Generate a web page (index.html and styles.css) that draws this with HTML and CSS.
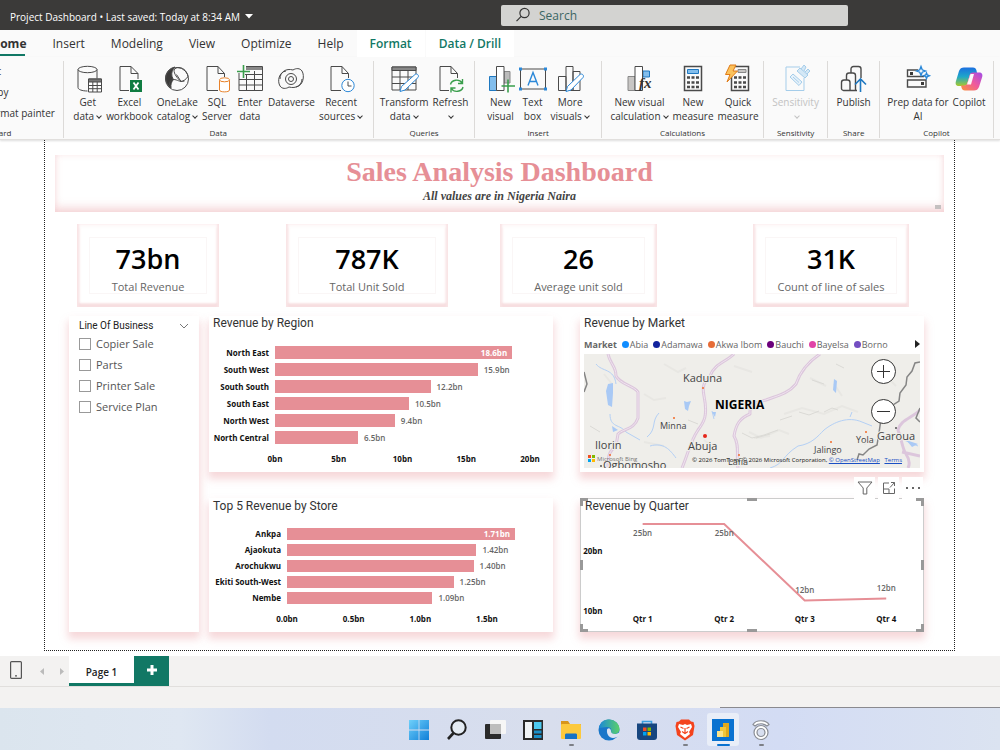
FILE: index.html
```
<!DOCTYPE html>
<html lang="en">
<head>
  <meta charset="UTF-8">
  <title>Project Dashboard</title>
  <meta name="viewport" content="width=device-width, initial-scale=1.0">
  <link rel="stylesheet" href="styles.css">
</head>
<body>
  <header class="titlebar">
    <button class="file-name">Project Dashboard • Last saved: Today at 8:34 AM
      <svg width="8" height="5" viewBox="0 0 8 5"><path d="M0 0h8L4 4.5z" fill="#fff"/></svg>
    </button>
    <label class="search">
      <svg width="16" height="16" viewBox="0 0 16 16" fill="none" stroke="#333" stroke-width="1.2"><circle cx="9.5" cy="6" r="4.6"/><path d="M6.2 9.4L1.5 14.2"/></svg>
      <input type="text" placeholder="Search" aria-label="Search">
    </label>
  </header>

  <nav class="tabs">
    <a href="#" class="active">Home</a>
    <a href="#">Insert</a>
    <a href="#">Modeling</a>
    <a href="#">View</a>
    <a href="#">Optimize</a>
    <a href="#">Help</a>
    <a href="#" class="context">Format</a>
    <a href="#" class="context">Data / Drill</a>
  </nav>

  <!-- Ribbon -->
  <div class="ribbon">
    <section class="group clipboard">
      <div class="stack">
        <button>Cut</button>
        <button>Copy</button>
        <button>Format painter</button>
      </div>
      <h6>Clipboard</h6>
    </section>

    <section class="group g-data">
      <div class="items">
        <button>
          <svg class="ico" viewBox="0 0 28 28"><path d="M4 4.5v18c0 2 4 3.5 9.5 3.5M23 4.5v9"/><ellipse cx="13.5" cy="4.5" rx="9.5" ry="3.2"/><path d="M14.5 14h13v13h-13z" fill="#fff"/><path d="M14.5 14h13v3h-13z" fill="#777"/><path d="M14.5 20.5h13M14.5 23.7h13M18.8 17v10M23.2 17v10"/></svg>
          <span>Get<br>data<i class="chev"></i></span>
        </button>
        <button>
          <svg class="ico" viewBox="0 0 28 28"><path d="M14 25.5H5v-24h11l7 7V14M16 1.5v7h7"/><path d="M15 15h12v12H15z" fill="#107c41" stroke="none"/><path d="M18.5 17.5l5 7M23.5 17.5l-5 7" stroke="#fff" stroke-width="1.8"/></svg>
          <span>Excel<br>workbook</span>
        </button>
        <button>
          <svg class="ico" viewBox="0 0 28 28"><path d="M12 2C4 3.5 0 12 4.5 19.5c1 1.7 2 2.5 3.5 3.5-.5-4 .5-6 2.5-8.5C8 11 8 6 12 2z" fill="#3b3a39"/><circle cx="14" cy="14" r="11.5"/><path d="M11 5c1-2 3-2.5 5-2.5 5 .5 8 4 9 9-2 3-4.5 4.500-7 5C14 13 11 9 11 5zM6.5 20c-.5-3 1-5 4-5.5 4 0 6 3 11 1.5M13.5 9.5l4.5 7"/></svg>
          <span>OneLake<br>catalog<i class="chev"></i></span>
        </button>
        <button>
          <svg class="ico" viewBox="0 0 28 28"><path d="M15 25.5H4v-24h11l6.5 7V12M15 1.5v7h6.5"/><g stroke="#e8822b" fill="#fff"><path d="M16.5 15v10c0 2.5 10 2.5 10 0V15"/><ellipse cx="21.5" cy="14.8" rx="5" ry="2"/></g></svg>
          <span>SQL<br>Server</span>
        </button>
        <button>
          <svg class="ico" viewBox="0 0 28 28"><path d="M3 8v17.5h23.5v-24H10M9 9.5h17.5M3 14.5h23.5M3 20h23.5M10.5 9v16.5M18.5 6v19.5"/><path d="M10 2h16v3H10z" fill="#888" stroke="none"/><path d="M7.5 0v13M1 6.5h13" stroke="#3a9e4c" stroke-width="1.6"/></svg>
          <span>Enter<br>data</span>
        </button>
        <button>
          <svg class="ico" viewBox="0 0 28 28"><circle cx="14" cy="14" r="5.5"/><circle cx="14" cy="14" r="2.5"/><path d="M19 22c7-1 9-11 6-16-2-3-6-3-9-1C9 3 3 7 3 14M9 6C2 7 0 16 3 21c2 3 6 3 9 1 7 2 13-2 13-8"/></svg>
          <span>Dataverse</span>
        </button>
        <button>
          <svg class="ico" viewBox="0 0 28 28"><path d="M14 25.5H4v-24h11l6.5 7V13M15 1.5v7h6.5"/><circle cx="21" cy="20.5" r="6.2" stroke="#2b88d8" fill="#fff"/><path d="M21 16.5V21h3.5"/></svg>
          <span>Recent<br>sources<i class="chev"></i></span>
        </button>
      </div>
      <h6>Data</h6>
    </section>

    <section class="group g-queries">
      <div class="items">
        <button>
          <svg class="ico" viewBox="0 0 28 28"><path d="M2 2h24v23H2z"/><path d="M2 2h24v3.5H2z" fill="#888"/><path d="M2 12h24M2 18.5h24M10 5.5V25M18 5.5V25"/><path d="M10 26.5l1.5-5L25 9.5c2-1.5 4.5 1 3 3L15 25z" fill="#fff" stroke="#2b88d8"/></svg>
          <span>Transform<br>data<i class="chev"></i></span>
        </button>
        <button>
          <svg class="ico" viewBox="0 0 28 28"><path d="M13 25.5H4v-24h11l6.5 7V13M15 1.5v7h6.5"/><g stroke="#3a9e4c" stroke-width="1.4"><path d="M14.5 19.5c1-5 9-6 11.5-1.5M26.5 14v4.5H22M27 22c-1 5-9 6-11.5 1.5M15 27.5V23h4.5"/></g></svg>
          <span>Refresh<br><i class="chev"></i></span>
        </button>
      </div>
      <h6>Queries</h6>
    </section>

    <section class="group g-insert">
      <div class="items">
        <button>
          <svg class="ico" viewBox="0 0 28 28"><path d="M2.5 11.5H10v14H2.5z" fill="#83beec" stroke="#1f78c0"/><path d="M17 6.5h6V18h-6z" fill="#bbb" stroke="#888"/><path d="M9.5 1.5H17v24H9.5z" fill="#fff"/><path d="M21 14.5v13M14.5 21H28" stroke="#3a9e4c" stroke-width="1.6"/></svg>
          <span>New<br>visual</span>
        </button>
        <button>
          <svg class="ico" viewBox="0 0 28 28"><path d="M1.5 4h25v20h-25z"/><path d="M9 20.5l5-13 5 13M10.8 16.5h6.5" stroke="#2b88d8" stroke-width="1.4"/><path d="M0 2.5h3v3H0zM25 2.5h3v3h-3zM0 22.5h3v3H0zM25 22.5h3v3h-3z" fill="#2b88d8" stroke="none"/></svg>
          <span>Text<br>box</span>
        </button>
        <button>
          <svg class="ico" viewBox="0 0 28 28"><path d="M2.5 11.5H10v14H2.5zM17 6.5h7v19h-7zM10 1.5h7v24h-7z"/><path d="M10 26.5l1.5-5L24 9.5c2-1.5 4.5 1 3 3L15 25z" fill="#fff" stroke="#2b88d8"/></svg>
          <span>More<br>visuals<i class="chev"></i></span>
        </button>
      </div>
      <h6>Insert</h6>
    </section>

    <section class="group g-calc">
      <div class="items">
        <button>
          <svg class="ico" viewBox="0 0 28 28"><path d="M3 11.5h7v14H3z" fill="#c8c6c4" stroke="#888"/><path d="M18 6h6.5v6H18z" fill="#83beec" stroke="#1f78c0"/><path d="M10 1.5h7.5v24H10z" fill="#fff"/><text x="14" y="23" class="fx">fx</text></svg>
          <span>New visual<br>calculation<i class="chev"></i></span>
        </button>
        <button>
          <svg class="ico" viewBox="0 0 28 28"><path d="M5.5 1.5h17v24h-17z" stroke-width="1.5"/><path d="M8.5 4.5h11v4h-11z" fill="#83beec" stroke="#1f78c0"/><path d="M8 12.5h12M8 17.5h12M8 22h12" stroke-width="2.6" stroke-dasharray="3 1.5"/></svg>
          <span>New<br>measure</span>
        </button>
        <button>
          <svg class="ico" viewBox="0 0 28 28"><path d="M7.5 1.5h17v24h-17z" stroke-width="1.5"/><path d="M14 4.5h8v3h-8z" fill="#c8c6c4" stroke="#888"/><path d="M10 12.5h12M10 17.5h12M10 22h12" stroke-width="2.6" stroke-dasharray="3 1.5"/><path d="M6 0h6L9 6h4.5L3 17l3-7.5H1.5z" fill="#fbc25c" stroke="#e07b18"/></svg>
          <span>Quick<br>measure</span>
        </button>
      </div>
      <h6>Calculations</h6>
    </section>

    <section class="group g-sens">
      <div class="items">
        <button disabled>
          <svg class="ico light" viewBox="0 0 28 28"><path d="M18 2H4v23.5h18V13"/><path d="M8 12l3-3 9 8-3 3.5zM11 12l6 5.5" fill="#e7f2fa"/><path d="M15 6l3-3 8 7-3 3zM19 4l3-4 2 2-2 4M23 7l3-3 2 2-3 3" fill="#d4e8f6"/></svg>
          <span>Sensitivity<br><i class="chev"></i></span>
        </button>
      </div>
      <h6>Sensitivity</h6>
    </section>

    <section class="group g-share">
      <div class="items">
        <button>
          <svg class="ico" viewBox="0 0 28 28" stroke-width="1.4"><path d="M11 8V4c0-1.500 1-2.500 2.500-2.500h5C20 1.500 21 2.500 21 4v9M6.500 15v-4.500C6.500 9 7.500 8 9 8h4c1.500 0 2.500 1 2.500 2.500V25.500M1.500 17.500c0-1.500 1-2.500 2.500-2.500h3.500c1.500 0 2.500 1 2.500 2.500v8H3.500c-1 0-2-1-2-2zM10 25.500h7"/><path d="M20.500 27V15M15 19.500l5.500-5.500 5.500 5.500" stroke="#1f78c0" stroke-width="1.6"/></svg>
          <span>Publish</span>
        </button>
      </div>
      <h6>Share</h6>
    </section>

    <section class="group g-copilot">
      <div class="items">
        <button>
          <svg class="ico" viewBox="0 0 28 28" stroke-width="1.4"><path d="M14 5H3.500v6.500H20M3.500 15H22v7H3.500z"/><path d="M6 7h3v3H6zM17 17h3v3h-3z" fill="#3b3a39" stroke="none"/><path d="M17 1.500l1.200 3.300 3.300 1.200-3.300 1.200L17 10.500l-1.200-3.300L12.500 6l3.300-1.200zM22.500 8l.8 2 2 .8-2 .8-.8 2-.8-2-2-.8 2-.8z" fill="#fff" stroke="#2b88d8"/></svg>
          <span>Prep data for<br>AI</span>
        </button>
        <button>
          <svg class="ico flat" viewBox="0 0 28 28">
            <defs>
              <linearGradient id="cpA" x1="0" y1="0" x2="0" y2="1"><stop offset="0" stop-color="#1b6fe0"/><stop offset=".5" stop-color="#1fa7c9"/><stop offset="1" stop-color="#a8c92b"/></linearGradient>
              <linearGradient id="cpB" x1="1" y1="0" x2="0" y2="1"><stop offset="0" stop-color="#a14be8"/><stop offset=".5" stop-color="#f05a9c"/><stop offset="1" stop-color="#f9943a"/></linearGradient>
            </defs>
            <path d="M9 2.500h9c2 0 3 1 3.500 3L22 8h-4c-2 0-3 1-3.500 3l-2 7c-.5 2-1.500 3-3.500 3H4c-3 0-4-2-3-5L4 6c1-2.500 2.500-3.500 5-3.500z" fill="url(#cpA)"/>
            <path d="M19 25.500h-9c-2 0-3-1-3.500-3L6 20.500h3c2 0 3-1 3.500-3l2-7c.5-2 1.500-3 3.500-3h6c3 0 4 2 3 5l-3 9.500c-1 2.500-2.500 3.500-5 3.500z" fill="url(#cpB)"/>
            <path d="M15.500 9h3.500l-3 10.500h-4z" fill="#fafafa"/>
          </svg>
          <span>Copilot</span>
        </button>
      </div>
      <h6>Copilot</h6>
    </section>
  </div>

  <!-- Report canvas -->
  <main class="canvas">
    <div class="board">
      <div class="banner">
        <h1>Sales Analysis Dashboard</h1>
        <p>All values are in Nigeria Naira</p>
        <span class="grip"></span>
      </div>

      <div class="kpis">
        <div class="kpi"><div><b>73bn</b><span>Total Revenue</span></div></div>
        <div class="kpi"><div><b>787K</b><span>Total Unit Sold</span></div></div>
        <div class="kpi"><div><b>26</b><span>Average unit sold</span></div></div>
        <div class="kpi"><div><b>31K</b><span>Count of line of sales</span></div></div>
      </div>

      <div class="visuals">
        <section class="card slicer">
          <h3>Line Of Business
            <svg width="10" height="6" viewBox="0 0 10 6" fill="none" stroke="#777"><path d="M1 1l4 4 4-4"/></svg>
          </h3>
          <label><input type="checkbox"> Copier Sale</label>
          <label><input type="checkbox"> Parts</label>
          <label><input type="checkbox"> Printer Sale</label>
          <label><input type="checkbox"> Service Plan</label>
        </section>

        <section class="card region">
          <h2>Revenue by Region</h2>
          <div class="bars">
            <div class="row"><span>North East</span><div><i style="width:93%"><em>18.6bn</em></i></div></div>
            <div class="row"><span>South West</span><div><i style="width:79.5%"></i><em>15.9bn</em></div></div>
            <div class="row"><span>South South</span><div><i style="width:61%"></i><em>12.2bn</em></div></div>
            <div class="row"><span>South East</span><div><i style="width:52.5%"></i><em>10.5bn</em></div></div>
            <div class="row"><span>North West</span><div><i style="width:47%"></i><em>9.4bn</em></div></div>
            <div class="row"><span>North Central</span><div><i style="width:32.5%"></i><em>6.5bn</em></div></div>
          </div>
          <div class="axis"><span>0bn</span><span>5bn</span><span>10bn</span><span>15bn</span><span>20bn</span></div>
        </section>

        <section class="card market">
          <h2>Revenue by Market</h2>
          <div class="legend">
            <b>Market</b>
            <span class="abia">Abia</span>
            <span class="adamawa">Adamawa</span>
            <span class="akwa">Akwa Ibom</span>
            <span class="bauchi">Bauchi</span>
            <span class="bayelsa">Bayelsa</span>
            <span class="borno">Borno</span>
            <button aria-label="Next"><svg width="5" height="8" viewBox="0 0 5 8"><path d="M0 0l5 4-5 4z" fill="#222"/></svg></button>
          </div>
          <div class="map">
            <svg viewBox="0 0 336 114" preserveAspectRatio="xMidYMid slice">
              <rect width="336" height="114" fill="#efeeea"/>
              <!-- relief -->
              <g fill="none" stroke="#e8e7e3" stroke-width="2">
                <path d="M80 10l14 8 8-4M60 40l10 6 12-2M150 12l18 6M200 60l18-6 22 6 18-8 16 6M165 78l12 6 18-8 10 4M170 84l16-2M20 20l8 10M120 86l10 8M226 24l16 8M250 30l8 12M60 88l20 4M280 90l12-4M300 20l12 12"/>
              </g>
              <g fill="none" stroke="#dbdad6"><path d="M158 79l10 5 12-3 14-5M172 84l14-4M196 66l12-4M215 58l10 3 10-4M228 26l12 4M252 10l8 4M6 72l10 6M104 66l10 4M240 58l8-4 6 2"/></g>
              <!-- water -->
              <g fill="none" stroke="#b4d0f5">
                <path d="M12 10c6 8 18 4 20 20M26 60c0 14 10 10 16 18l14 8M66 92c14-4 20 4 26 12M75 59c-8 8-2 16-12 24M186 114c14-4 12-12 28-22 14-2 20-10 26-16 10-8 24-14 38-8l10 4M128 57l2 8M268 58l-2 5M320 86l14 6"/>
              </g>
              <g fill="#a9c9f5"><path d="M24 30l5-1v10l-1 14-4-2-2-14zM28 72l6 4-5 2zM100 47l3 1 4-1-2 5-1 5-3-2zM250 25l3 2-1 12-3-3zM322 86l12 4-6 3zM128 58h4l-1 5z"/></g>
              <!-- roads -->
              <g fill="none" stroke="#dcc6dc" stroke-width="3" stroke-linejoin="round">
                <path d="M24 0c2 10 8 12 8 22 4 8 18 10 22 16v26c-4 12-14 10-20 16l-2 12c-8 6-8 12-8 22"/>
                <path d="M150 0c-8 8-20 10-24 22-6 6-8 10-6 20 4 20 0 26-6 34-8 12-10 24-16 38"/>
                <path d="M236 0c-12 8-20 18-24 30-8 10-20 12-30 16-18 4-16 8-16 14-10 4-14 10-16 22 6 10 2 20 4 32"/>
                <path d="M336 56c-8 8-20 10-22 20 4 10 4 18 8 24 4 6 4 10 2 14M318 98l18 4"/>
              </g>
              <g fill="none" stroke="#efe4ef"><path d="M24 0c2 10 8 12 8 22 4 8 18 10 22 16v26c-4 12-14 10-20 16l-2 12c-8 6-8 12-8 22M150 0c-8 8-20 10-24 22-6 6-8 10-6 20 4 20 0 26-6 34-8 12-10 24-16 38M236 0c-12 8-20 18-24 30-8 10-20 12-30 16-18 4-16 8-16 14-10 4-14 10-16 22 6 10 2 20 4 32"/></g>
              <!-- border -->
              <g fill="none" stroke="#858585" stroke-width="1.5"><path d="M336 8l-5 1-3 8-5 6-1 8-6 8-1 8-6 4-4 10-8 4-2 14-2 12-8 4-6 6-4-1-2 6M336 54l-4 10 4 4M0 18l3 12-3 8"/></g>
              <g fill="#f26b2a"><circle cx="119" cy="34" r="1"/><circle cx="90" cy="64" r="1"/><circle cx="155" cy="101" r="1"/><circle cx="247" cy="88" r="1"/><circle cx="282" cy="78" r="1"/><circle cx="26" cy="101" r="1"/></g>
              <circle cx="121" cy="82" r="2" fill="#e5261b"/>
              <g fill="#555"><circle cx="312" cy="74" r="1"/><circle cx="17" cy="112" r="1"/></g>
              <g class="places">
                <text x="99" y="28">Kaduna</text>
                <text x="76" y="75" class="town">Minna</text>
                <text x="11" y="95">Ilorin</text>
                <text x="104" y="96">Abuja</text>
                <text x="19" y="115">Ogbomosho</text>
                <text x="230" y="99" class="town">Jalingo</text>
                <text x="272" y="89" class="town">Yola</text>
                <text x="293" y="86">Garoua</text>
                <text x="144" y="111" class="town">Lafia</text>
                <text x="131" y="55" class="country">NIGERIA</text>
              </g>
              <path d="M4 101h3v3H4z" fill="#f25022"/><path d="M8 101h3v3H8z" fill="#7fba00"/><path d="M4 105h3v3H4z" fill="#00a4ef"/><path d="M8 105h3v3H8z" fill="#ffb900"/>
              <text x="13" y="107" class="bing">Microsoft Bing</text>
            </svg>
            <div class="zoom">
              <button aria-label="Zoom in"><svg width="15" height="15" viewBox="0 0 15 15" stroke="#333"><path d="M7.5 1v13M1 7.5h13"/></svg></button>
              <button aria-label="Zoom out"><svg width="15" height="15" viewBox="0 0 15 15" stroke="#333"><path d="M1 7.5h13"/></svg></button>
            </div>
            <small>© 2026 TomTom, © 2026 Microsoft Corporation, <a href="#">© OpenStreetMap</a> <a href="#">Terms</a></small>
          </div>
        </section>

        <section class="card store">
          <h2>Top 5 Revenue by Store</h2>
          <div class="bars">
            <div class="row"><span>Ankpa</span><div><i style="width:114%"><em>1.71bn</em></i></div></div>
            <div class="row"><span>Ajaokuta</span><div><i style="width:94.7%"></i><em>1.42bn</em></div></div>
            <div class="row"><span>Arochukwu</span><div><i style="width:93.3%"></i><em>1.40bn</em></div></div>
            <div class="row"><span>Ekiti South-West</span><div><i style="width:83.3%"></i><em>1.25bn</em></div></div>
            <div class="row"><span>Nembe</span><div><i style="width:72.7%"></i><em>1.09bn</em></div></div>
          </div>
          <div class="axis"><span>0.0bn</span><span>0.5bn</span><span>1.0bn</span><span>1.5bn</span></div>
        </section>

        <section class="card quarter">
          <div class="tools">
            <button aria-label="Filters"><svg width="16" height="14" viewBox="0 0 16 14"><path d="M1 1h14L9.800 7v6H6.200V7z"/></svg></button>
            <button aria-label="Focus mode"><svg width="14" height="14" viewBox="0 0 14 14"><path d="M7 2H1.500v10.500h11V7.500M1.500 8H7v4.500M8 6.500l4.500-5M9 1.500h3.500V5"/></svg></button>
            <button aria-label="More options"><svg width="16" height="14" viewBox="0 0 16 14"><path d="M1 7h2M7 7h2M13 7h2" stroke-width="2"/></svg></button>
          </div>
          <h2>Revenue by Quarter</h2>
          <svg class="line" viewBox="0 0 344 118">
            <path d="M62 11h82l81 77 82-2" fill="none" stroke="#e68f96" stroke-width="2"/>
            <g class="vals"><text x="62" y="23">25bn</text><text x="144" y="23">25bn</text><text x="225" y="80">12bn</text><text x="307" y="78">12bn</text></g>
            <g class="ticks"><text x="12" y="41">20bn</text><text x="12" y="102">10bn</text><text x="62" y="110">Qtr 1</text><text x="144" y="110">Qtr 2</text><text x="225" y="110">Qtr 3</text><text x="307" y="110">Qtr 4</text></g>
          </svg>
          <div class="handles"><i></i><i></i><i></i><i></i><i></i><i></i><i></i><i></i></div>
        </section>
      </div>
    </div>
  </main>

  <footer class="pages">
    <button class="phone" aria-label="Mobile layout"><svg width="12" height="18" viewBox="0 0 12 18" fill="none" stroke="#555" stroke-width="1.2"><rect x=".6" y=".6" width="10.8" height="16.8" rx="1"/><path d="M5 14.8h2"/></svg></button>
    <button aria-label="Previous page"><svg width="4" height="7" viewBox="0 0 4 7"><path d="M4 0v7L0 3.500z" fill="#bbb"/></svg></button>
    <button aria-label="Next page"><svg width="4" height="7" viewBox="0 0 4 7"><path d="M0 0v7l4-3.500z" fill="#bbb"/></svg></button>
    <button class="page">Page 1</button>
    <button class="add" aria-label="New page"><svg width="10" height="10" viewBox="0 0 10 10" stroke="#fff" stroke-width="3"><path d="M5 0v10M0 5h10"/></svg></button>
  </footer>
  <div class="status"></div>

  <div class="taskbar">
    <button aria-label="Start"><svg viewBox="0 0 22 22"><defs><linearGradient id="win" x1="0" y1="0" x2="1" y2="1"><stop offset="0" stop-color="#6fd0fa"/><stop offset="1" stop-color="#0f7fd8"/></linearGradient></defs><path d="M1 1h9.600v9.600H1zM11.400 1H21v9.600h-9.600zM1 11.400h9.600V21H1zM11.400 11.400H21V21h-9.600z" fill="url(#win)"/></svg></button>
    <button aria-label="Search"><svg viewBox="0 0 22 22" fill="none" stroke="#222" stroke-width="2"><circle cx="12.5" cy="8.5" r="7.2" fill="#e4ebf3"/><path d="M7.500 14L2 20" stroke-width="2.6"/></svg></button>
    <button aria-label="Task view"><svg viewBox="0 0 22 22"><rect x="1" y="5" width="16" height="15" rx="1" fill="#2a2a2a"/><rect x="6" y="1" width="16" height="14" rx="1" fill="#f6f6f6"/><path d="M6 5h11v10H6z" fill="#bdbdbd"/></svg></button>
    <button aria-label="Widgets"><svg viewBox="0 0 22 22"><rect x="1" y="1" width="20" height="20" fill="#2a2a2a"/><path d="M3 3h7v16H3z" fill="#f1f4f6"/><path d="M12 3h7.500v7H12z" fill="#4cc9ef"/><path d="M12 11.500h7.500v3H12zM12 16h7.500v3H12z" fill="#1a8fc8"/></svg></button>
    <button aria-label="File Explorer" class="open"><svg viewBox="0 0 22 22"><path d="M1 2h7l2 3h11v3H1z" fill="#d8961a"/><rect x="1" y="5" width="20" height="15" rx="1" fill="#fcc93d"/><path d="M5 20v-4c0-1 .5-1.500 1.500-1.500h9c1 0 1.500.5 1.500 1.500v4z" fill="#1672c4"/></svg></button>
    <button aria-label="Edge"><svg viewBox="0 0 22 22"><defs><linearGradient id="edg" x1="0" y1="0" x2="1" y2="0"><stop offset="0" stop-color="#1b8ad6"/><stop offset="1" stop-color="#5bd06a"/></linearGradient></defs><circle cx="11" cy="11" r="10.5" fill="#1976c9"/><path d="M1 9C2 3 6 .5 11 .5 17 .5 21.500 5 21.500 10c0 3-2.500 5-5.500 5-2 0-3-1-3-2 1-2 0-5-4-5-3 0-6 1-8 1z" fill="url(#edg)"/><path d="M9 11c0-1 1.500-2 2.500-1.500 1.500 1 1.500 2 1.500 3 0 1.500 1.500 2.500 3.500 2.500 2 0 3.500-.5 5-2v3c-2 2-4 3-6.500 3-4 0-6.500-4-6-8z" fill="#dbe3f2"/></svg></button>
    <button aria-label="Store"><svg viewBox="0 0 22 22"><path d="M6.500 5V2.500h9V5" fill="none" stroke="#3a9fe0" stroke-width="1.6"/><path d="M1 4.500h20V18c0 2-1 3-3 3H4c-2 0-3-1-3-3z" fill="#17467f"/><path d="M7 8.500h3.500V12H7z" fill="#f25022"/><path d="M11.500 8.500H15V12h-3.500z" fill="#7fba00"/><path d="M7 13h3.500v3.500H7z" fill="#00a4ef"/><path d="M11.500 13H15v3.500h-3.500z" fill="#ffb900"/></svg></button>
    <button aria-label="Brave" class="open"><svg viewBox="0 0 22 22"><path d="M7 .5h8l2 2 2.500.5 1 4-1.500 9-8 5.500L3 16 1.500 7l1-4L5 2.500z" fill="#f4431d"/><path d="M5 5l4 1 2-1 2 1 4-1 1 3-3 5 1 2-5 4-5-4 1-2-3-5z" fill="#fff"/><path d="M6.500 8l3 1.500M15.500 8l-3 1.500M11 9v4.500M8 12.500l3 2 3-2" fill="none" stroke="#f4431d" stroke-width="1.2"/></svg></button>
    <button aria-label="Power BI" class="open current"><svg viewBox="0 0 22 22"><path d="M0 0h22v22H0z" fill="#0a72d0"/><path d="M11 4h6v14h-6z" fill="#e0a81c"/><path d="M8 8h6v10H8z" fill="#f2c63a"/><path d="M5 12h6v6H5z" fill="#fbe38a"/></svg></button>
    <button aria-label="Cast" class="open"><svg viewBox="0 0 22 22" fill="none" stroke="#8a8d94" stroke-width="1.2"><path d="M3 5.500C6 .5 16 .5 19 5.500L17 7C14 4 8 4 5 7z" fill="#fff"/><circle cx="11" cy="13.5" r="7" fill="#fff"/><circle cx="11" cy="13.5" r="4" fill="#d8dff0"/></svg></button>
  </div>
</body>
</html>
```
FILE: styles.css
```
* {
  box-sizing: border-box;
}
body {
  margin: 0;
  min-height: 100vh;
  display: flex;
  flex-direction: column;
  font-family: "Open Sans", "Noto Sans", sans-serif;
  font-size: 10px;
  color: #333;
  background: #fff;
  overflow-x: hidden;
}
button {
  font: inherit;
  color: inherit;
  background: none;
  border: none;
  padding: 0;
}
h1, h2, h3, h6, p {
  margin: 0;
}

/* title bar */
.titlebar {
  height: 30px;
  background: #3b3a39;
  display: grid;
  grid-template-columns: 501fr 347fr 152fr;
  align-items: center;
}
.file-name {
  justify-self: start;
  margin: 4px 0 0 10px;
  color: #fff;
  white-space: nowrap;
}
.file-name svg {
  margin: 0 0 2px 2px;
}
.search {
  height: 21px;
  background: #d3d3d1;
  border-radius: 2px;
  display: flex;
  align-items: center;
  gap: 8px;
  padding-left: 14px;
}
.search input {
  flex: 1;
  min-width: 0;
  border: none;
  background: none;
  font: 12px "Open Sans", sans-serif;
  padding: 0;
}
.search input::placeholder {
  color: #3c6664;
}

/* ribbon tabs */
.tabs {
  display: flex;
  height: 27px;
  background: #fafafa;
  padding-right: 22px;
  margin-left: -22px;
}
.tabs a {
  padding: 0 13px;
  font-size: 12px;
  line-height: 27px;
  color: #333;
  text-decoration: none;
  position: relative;
}
.tabs .active {
  font-weight: bold;
}
.tabs .active::after {
  content: "";
  position: absolute;
  left: 14px;
  right: 14px;
  bottom: 1px;
  height: 2px;
  background: #117865;
}
.tabs .context {
  font-weight: 600;
  color: #117865;
  background: #fff;
  margin-right: 1px;
}

.ribbon {
  display: flex;
  height: 83px;
  padding: 4px 0 1px;
  background: #fafafa;
  border-bottom: 1px solid #e1dfdd;
  box-shadow: 0 1px 2px #ddd;
}
.group {
  display: flex;
  flex-direction: column;
  border-right: 1px solid #dcdad8;
  min-width: 0;
}
.group h6 {
  font-size: 8px;
  font-weight: normal;
  line-height: 10px;
  text-align: center;
}
.items {
  flex: 1;
  display: flex;
  justify-content: center;
  align-items: flex-start;
  gap: 4px;
  padding-top: 4px;
}
.items button {
  text-align: center;
  line-height: 14px;
  white-space: nowrap;
}
.items button:disabled {
  color: #c3c3c3;
}
.ico {
  display: block;
  width: 28px;
  height: 28px;
  margin: 0 auto 2px;
  fill: none;
  stroke: #4a4a4a;
  overflow: visible;
}
.ico.light {
  stroke: #a5cdea;
}
.ico.flat {
  stroke: none;
}
.fx {
  font: italic bold 15px "Liberation Serif", serif;
  fill: #333;
  stroke: none;
}
.chev {
  display: inline-block;
  width: 4px;
  height: 4px;
  border: solid;
  border-width: 0 1px 1px 0;
  transform: rotate(45deg);
  margin: 0 1px 2px 3px;
}
.clipboard {
  flex: 63 1 0;
  overflow: hidden;
}
.stack {
  flex: 1;
  display: flex;
  flex-direction: column;
  align-items: flex-start;
  margin-left: -15px;
}
.stack button {
  line-height: 21px;
  white-space: nowrap;
}
.clipboard h6 {
  text-align: left;
  margin-left: -25px;
}
.g-data { flex: 312 1 0; }
.g-queries { flex: 101 1 0; }
.g-insert { flex: 127 1 0; }
.g-calc { flex: 162 1 0; }
.g-calc .items { padding-left: 4px; }
.g-sens { flex: 64 1 0; }
.g-share { flex: 51 1 0; }
.g-copilot { flex: 114 1 0; margin-right: 6px; }

/* report */
.canvas {
  flex: 1;
  padding: 0 45px 5px 44px;
}
.board {
  height: 100%;
  border: 1px dotted #222;
  border-top: none;
  padding: 15px 10px 18px;
}
.banner {
  position: relative;
  height: 57px;
  text-align: center;
  box-shadow: inset 0 -7px 10px -2px rgba(230, 143, 150, .3), inset 0 0 6px rgba(230, 143, 150, .2);
}
.banner h1 {
  font: bold 28px/34px "Liberation Serif", serif;
  color: #e68f96;
}
.banner p {
  font: italic bold 12px/14px "Liberation Serif", serif;
  color: #444;
}
.grip {
  position: absolute;
  right: 3px;
  bottom: 3px;
  width: 6px;
  height: 4px;
  background: #c4c0c0;
}
.kpis {
  display: grid;
  grid-template-columns: 142fr 67fr 162fr 52fr 157fr 96fr 156fr;
  margin: 12px 35px 9px 22px;
}
.kpi {
  height: 83px;
  padding: 13px 12px;
  box-shadow: inset 0 -2px 2px 2px rgba(230, 143, 150, .2), inset 0 2px 2px 2px rgba(255, 255, 255, .6), inset 0 0 2px 3px rgba(230, 143, 150, .12);
}
.kpi:nth-child(2) { grid-column: 3; }
.kpi:nth-child(3) { grid-column: 5; }
.kpi:nth-child(4) { grid-column: 7; }
.kpi div {
  height: 57px;
  border: 1px solid #faf6f6;
  display: flex;
  flex-direction: column;
  align-items: center;
  white-space: nowrap;
}
.kpi b {
  font-size: 27px;
  font-weight: 600;
  line-height: 42px;
  color: #000;
}
.kpi span {
  font-size: 11px;
  line-height: 14px;
  color: #666;
}

.visuals {
  display: grid;
  grid-template-columns: 130fr 354fr 27fr 344fr;
  grid-template-rows: 156px 134px;
  gap: 26px 0;
  margin: 0 20px 0 14px;
}
.card {
  position: relative;
  min-width: 0;
  background: #fff;
  box-shadow: 0 6px 8px 1px rgba(230, 143, 150, .35);
}
.card h2 {
  font: 12px/14px Roboto, sans-serif;
  color: #333;
  padding-left: 4px;
}
.slicer {
  grid-row: 1 / 3;
  padding: 3px 10px;
}
.region, .store {
  grid-column: 2;
  margin-left: 10px;
}
.market, .quarter {
  grid-column: 4;
}
.slicer h3 {
  font: 10px/14px Roboto, sans-serif;
  color: #222;
  display: flex;
  justify-content: space-between;
  align-items: center;
}
.slicer label {
  display: flex;
  align-items: center;
  gap: 5px;
  height: 21px;
  font-size: 11px;
  color: #555;
}
.slicer input {
  appearance: none;
  width: 12px;
  height: 12px;
  margin: 0;
  border: 1px solid #999;
  background: #fff;
}

/* bar charts */
.bars {
  display: grid;
  gap: 4px;
  font-size: 8px;
  font-weight: bold;
  color: #111;
}
.row {
  display: flex;
}
.row > span {
  flex: none;
  text-align: right;
  white-space: nowrap;
  margin-right: 6px;
}
.row > div {
  flex: 1;
  display: flex;
}
.row i {
  flex: none;
  background: #e68f96;
  text-align: right;
}
.row em {
  font-style: normal;
  font-weight: 600;
  color: #666;
  margin-left: 6px;
}
.row i em {
  color: #fff;
  font-weight: bold;
  margin-right: 5px;
}
.axis {
  display: flex;
  justify-content: space-between;
  font-size: 8px;
  font-weight: bold;
  line-height: 12px;
  color: #111;
}
.axis span {
  width: 0;
  display: flex;
  justify-content: center;
}
.region .bars { padding: 16px 23px 0 0; }
.region .row { line-height: 13px; }
.region .row > span { width: 60px; }
.region .axis { margin: 9px 23px 0 66px; }
.store h2 { padding-top: 1px; }
.store .bars { padding: 15px 66px 0 0; }
.store .row { line-height: 12px; }
.store .row > span { width: 72px; }
.store .axis { margin: 9px 66px 0 78px; }

/* map */
.legend {
  display: flex;
  align-items: center;
  gap: 5px;
  height: 14px;
  margin: 7px 4px 3px;
  font-size: 9px;
  color: #666;
  white-space: nowrap;
}
.legend span::before {
  content: "";
  display: inline-block;
  width: 7px;
  height: 7px;
  border-radius: 50%;
  margin-right: 1px;
  background: currentColor;
}
.legend .abia::before { background: #118dff; }
.legend .adamawa::before { background: #12239e; }
.legend .akwa::before { background: #e66c37; }
.legend .bauchi::before { background: #6b007b; }
.legend .bayelsa::before { background: #e044a7; }
.legend .borno::before { background: #744ec2; }
.legend button {
  margin-left: auto;
  line-height: 8px;
}
.map {
  position: relative;
  height: 114px;
  margin: 0 4px;
}
.map > svg {
  display: block;
  width: 100%;
  height: 100%;
}
.places text {
  font-size: 11px;
  fill: #444;
  paint-order: stroke;
  stroke: #efeeea;
  stroke-width: 2px;
}
.places .town {
  font-size: 9px;
}
.places .country {
  font-size: 12px;
  font-weight: bold;
  fill: #000;
}
.bing {
  font-size: 6px;
  fill: #777;
}
.zoom {
  position: absolute;
  top: 5px;
  right: 24px;
  display: grid;
  gap: 15px;
}
.zoom button {
  width: 25px;
  height: 25px;
  border: 1px solid #333;
  border-radius: 50%;
  background: #fff;
  display: grid;
  place-items: center;
}
.map small {
  position: absolute;
  right: 18px;
  bottom: 3px;
  font: 6px/10px "Open Sans", sans-serif;
  color: #111;
  white-space: nowrap;
}
.map a {
  color: #1a4fc4;
  margin-right: 3px;
}
.map a:last-child {
  margin-right: 0;
}

/* line chart, selected */
.quarter {
  border: 1px solid #ccc;
}
.line {
  display: block;
  width: 100%;
}
.line text {
  font-size: 8px;
  font-weight: bold;
  text-anchor: middle;
  fill: #111;
}
.line .vals text {
  font-weight: 600;
  fill: #666;
}
.tools {
  position: absolute;
  right: 0;
  bottom: 100%;
  display: flex;
  gap: 3px;
}
.tools button {
  width: 21px;
  height: 22px;
  background: #fff;
  display: grid;
  place-items: center;
}
.tools svg {
  fill: none;
  stroke: #666;
}
.handles i {
  position: absolute;
  width: 8px;
  height: 8px;
  border: 0 solid #999;
}
.handles i:nth-child(1) { left: -1px; top: -1px; border-width: 3px 0 0 3px; }
.handles i:nth-child(2) { left: calc(50% - 5px); top: -1px; width: 10px; border-top-width: 3px; }
.handles i:nth-child(3) { right: -1px; top: -1px; border-width: 3px 3px 0 0; }
.handles i:nth-child(4) { left: -1px; top: calc(50% - 5px); height: 10px; border-left-width: 3px; }
.handles i:nth-child(5) { right: -1px; top: calc(50% - 5px); height: 10px; border-right-width: 3px; }
.handles i:nth-child(6) { left: -1px; bottom: -1px; border-width: 0 0 3px 3px; }
.handles i:nth-child(7) { left: calc(50% - 5px); bottom: -1px; width: 10px; border-bottom-width: 3px; }
.handles i:nth-child(8) { right: -1px; bottom: -1px; border-width: 0 3px 3px 0; }

/* page tabs */
.pages {
  display: flex;
  align-items: stretch;
  height: 31px;
  background: #f3f2f1;
  border-bottom: 1px solid #e1dfdd;
  padding-left: 10px;
}
.pages button {
  width: 20px;
}
.pages .phone {
  width: 22px;
  text-align: left;
}
.pages .page {
  width: 65px;
  margin-left: -3px;
  padding-top: 4px;
  background: #fff;
  color: #222;
  font-weight: 600;
  border-bottom: 3px solid #117865;
}
.pages .add {
  width: 35px;
  background: #117865;
}
.status {
  height: 21px;
  display: flex;
  align-items: flex-end;
  justify-content: flex-end;
  background: #f3f2f1;
}
.status::after {
  content: "";
  width: 28%;
  height: 1px;
  background: #8a8a8f;
}

/* windows taskbar */
.taskbar {
  height: 42px;
  display: flex;
  justify-content: center;
  gap: 6px;
  padding: 5px 0 0 180px;
  background: linear-gradient(90deg, #dbe5ee, #dfe7f2 18%, #d3dcf0 27%, #d8deed 55%, #d3dcf4 78%, #dbe3f1);
}
.taskbar button {
  position: relative;
  width: 32px;
  height: 33px;
  border-radius: 3px;
}
.taskbar svg {
  width: 22px;
  height: 22px;
  display: block;
  margin: 0 auto;
}
.taskbar .current {
  background: #e9eef8;
}
.taskbar .open::after {
  content: "";
  position: absolute;
  left: 14px;
  bottom: 0;
  width: 5px;
  height: 2px;
  border-radius: 2px;
  background: #7c7f86;
}
.taskbar .current::after {
  left: 10px;
  width: 13px;
  background: #0a72d0;
}
```
